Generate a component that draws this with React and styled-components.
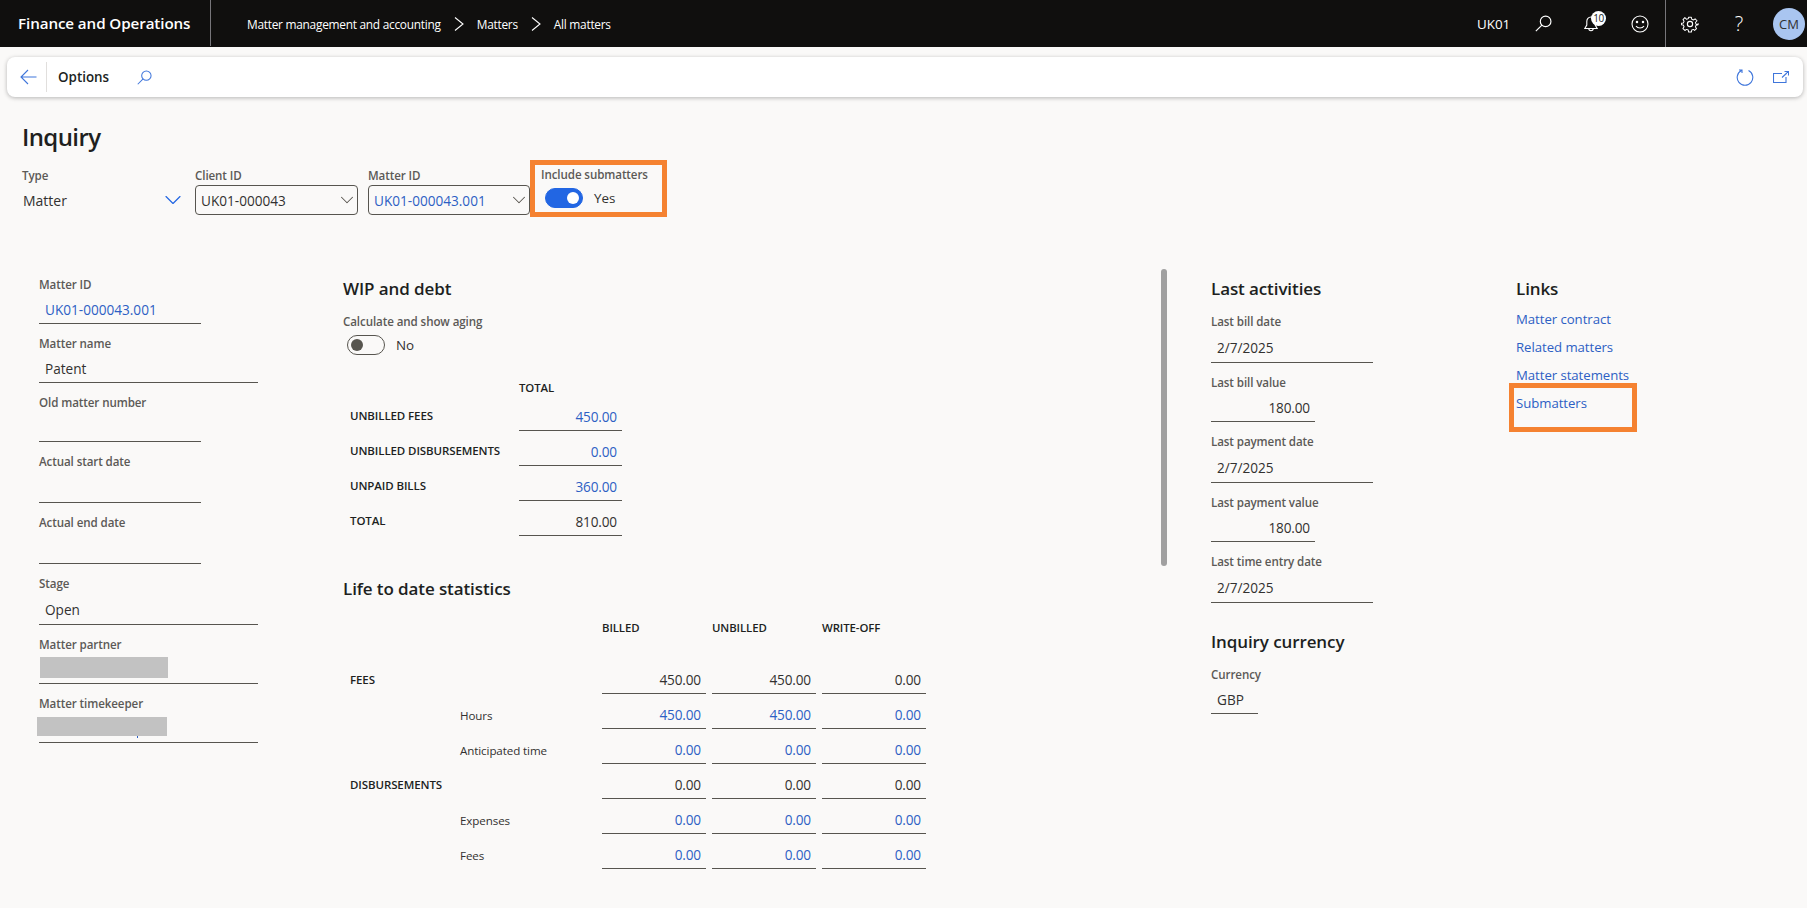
import { Fragment } from 'react';
import styled, { createGlobalStyle } from 'styled-components';
import { LuChevronDown } from 'react-icons/lu';

const GlobalStyle = createGlobalStyle`
  html, body {
    margin: 0;
    padding: 0;
    background: #faf9f8;
    color: #201f1e;
    font-family: "Open Sans", "Noto Sans", "Liberation Sans", sans-serif;
  }
  * {
    box-sizing: border-box;
  }
`;

const Page = styled.div`
  width: 1807px;
  height: 908px;
  overflow: hidden;
  background: #faf9f8;
`;

const TopBar = styled.header`
  display: flex;
  align-items: center;
  height: 47px;
  background: #100f0e;
  color: #fff;
`;

const AppName = styled.div`
  display: flex;
  align-items: center;
  width: 211px;
  height: 46px;
  margin-top: -1px;
  padding-left: 18px;
  border-right: 1px solid #77767a;
  font-size: 15.2px;
  font-weight: 600;
  letter-spacing: -0.1px;
  white-space: nowrap;
`;

const Crumbs = styled.nav`
  display: flex;
  align-items: center;
  padding-left: 36px;
  font-size: 11.9px;
  letter-spacing: -0.27px;

  svg {
    margin: 0 13px;
  }
`;

const TopRight = styled.div`
  display: flex;
  align-items: center;
  margin-left: auto;
  height: 47px;
`;

const Company = styled.span`
  width: 50px;
  font-size: 13.4px;
`;

const TopIcon = styled.span`
  position: relative;
  display: flex;
  justify-content: center;
  width: ${(p) => p.$w}px;
`;

const Badge = styled.span`
  position: absolute;
  top: -5px;
  left: 50%;
  width: 15px;
  height: 15px;
  border-radius: 50%;
  background: #fff;
  color: #201f1e;
  font-size: 10px;
  line-height: 15px;
  letter-spacing: -0.4px;
  text-align: center;
`;

const HelpMark = styled.span`
  font-size: 20px;
  font-weight: 300;
  line-height: 20px;
`;

const TopDivider = styled.span`
  width: 1px;
  height: 47px;
  margin-left: 8px;
  background: #77767a;
`;

const Avatar = styled.span`
  display: flex;
  align-items: center;
  justify-content: center;
  width: 32px;
  height: 32px;
  margin: 0 2px 0 9px;
  border-radius: 50%;
  background: #a9c5f0;
  color: #323130;
  font-size: 13px;
`;

const Toolbar = styled.div`
  display: flex;
  align-items: center;
  height: 40px;
  margin: 10px 4px 0 7px;
  padding: 0 14px 0 13px;
  background: #fff;
  border-radius: 8px;
  box-shadow: 0 1px 4px rgba(0, 0, 0, 0.28);
`;

const ToolDivider = styled.span`
  width: 1px;
  height: 30px;
  margin: 0 11px 0 9px;
  background: #e1dfdd;
`;

const ToolLabel = styled.span`
  width: 79px;
  font-size: 13.4px;
  font-weight: 600;
`;

const ToolRight = styled.div`
  display: flex;
  align-items: center;
  gap: 19px;
  margin-left: auto;
`;

const Title = styled.h1`
  margin: 20px 0 0 22px;
  height: 34px;
  font-size: 24px;
  line-height: 40px;
  font-weight: 600;
  letter-spacing: -0.6px;
`;

const FilterRow = styled.div`
  display: flex;
  align-items: flex-start;
  margin: 9px 0 0 22px;
`;

const FilterField = styled.div`
  width: ${(p) => p.$w}px;
  padding-top: 8px;
`;

const Label = styled.div`
  height: 16px;
  margin-top: ${(p) => p.$mt || 0}px;
  color: #5c5a57;
  font-size: 11.6px;
  font-weight: 600;
  line-height: 16px;
  letter-spacing: -0.1px;
  white-space: nowrap;
`;

const TypeValue = styled.div`
  display: flex;
  align-items: center;
  justify-content: space-between;
  width: 158px;
  height: 30px;
  margin-top: 1px;
  font-size: 14px;
  padding-left: 1px;
  color: #323130;

  svg {
    margin-right: -7px;
    color: #2266e3;
    font-size: 28px;
    stroke-width: 1;
  }
`;

const Select = styled.div`
  display: flex;
  align-items: center;
  justify-content: space-between;
  width: ${(p) => p.$w}px;
  height: 30px;
  margin-top: 1px;
  padding: 0 3px 0 5px;
  border: 1px solid #57554f;
  border-radius: 4px;
  color: ${(p) => (p.$link ? '#2d5fc4' : '#323130')};
  font-size: 13.6px;

  svg {
    margin-right: -4px;
    color: #57554f;
    font-size: 22px;
    stroke-width: 1.1;
  }
`;

const HighlightBox = styled.div`
  border: 5px solid #f58231;
`;

const IncludeBox = styled(HighlightBox)`
  width: 137px;
  height: 57px;
  padding: 2px 0 0 6px;
`;

const ToggleRow = styled.div`
  display: flex;
  align-items: center;
  gap: 11px;
  margin: ${(p) => p.$m};
  font-size: 13.4px;
  color: #323130;
`;

const Toggle = styled.span`
  display: flex;
  align-items: center;
  justify-content: ${(p) => (p.$on ? 'flex-end' : 'flex-start')};
  width: 38px;
  height: 20px;
  padding: 0 3px;
  border-radius: 10px;
  border: 1px solid ${(p) => (p.$on ? '#2266e3' : '#57554f')};
  background: ${(p) => (p.$on ? '#2266e3' : 'transparent')};

  &::after {
    content: '';
    width: 12px;
    height: 12px;
    border-radius: 50%;
    background: ${(p) => (p.$on ? '#fff' : '#57554f')};
  }
`;

const Columns = styled.main`
  display: grid;
  grid-template-columns: 304px 868px 305px 1fr;
  margin: 60px 0 0 39px;
`;

const FieldStack = styled.div`
  display: flex;
  flex-direction: column;
  gap: 12px;
  margin-top: ${(p) => p.$mt || 0}px;
`;

const Field = styled.div`
  position: relative;
  width: ${(p) => p.$w || 162}px;
  height: ${(p) => (p.$tall ? 49 : 47)}px;
  border-bottom: 1px solid #57554f;
`;

const Value = styled.div`
  height: 22px;
  margin-top: ${(p) => (p.$tall ? 7 : 6)}px;
  padding: 0 ${(p) => (p.$right ? '5px' : '6px')};
  color: ${(p) => (p.$link ? '#2d5fc4' : '#323130')};
  font-size: 13.6px;
  line-height: 22px;
  letter-spacing: ${(p) => (p.$right ? '-0.15px' : '0')};
  text-align: ${(p) => (p.$right ? 'right' : 'left')};
`;

const RedactBlock = styled.div`
  position: absolute;
  left: ${(p) => p.$l}px;
  top: ${(p) => p.$t}px;
  width: ${(p) => p.$w}px;
  height: ${(p) => p.$h}px;
  background: #c2c2c2;
`;

const Peek = styled.span`
  position: absolute;
  left: 98px;
  top: 40px;
  width: 1px;
  height: 2px;
  background: #2d5fc4;
`;

const Middle = styled.section`
  position: relative;
`;

const Scrollbar = styled.div`
  position: absolute;
  left: 818px;
  top: -8px;
  width: 6px;
  height: 297px;
  border-radius: 3px;
  background: #a0a0a0;
`;

const SectionTitle = styled.h2`
  height: 24px;
  margin: ${(p) => p.$mt || 0}px 0 0;
  font-size: 17px;
  font-weight: 600;
  line-height: 24px;
  letter-spacing: -0.1px;
`;

const StatsGrid = styled.div`
  display: grid;
  grid-template-columns: ${(p) => p.$cols};
  column-gap: ${(p) => p.$gap || 0}px;
  margin: ${(p) => p.$mt}px 0 0 7px;
`;

const ColHead = styled.div`
  height: ${(p) => p.$h}px;
  font-size: 11.4px;
  font-weight: 600;
  line-height: 16px;
  color: #201f1e;
  letter-spacing: -0.1px;
`;

const RowLabel = styled.div`
  grid-column: ${(p) => p.$col || 1};
  height: 35px;
  padding: ${(p) => p.$pt}px 0 0;
  font-size: ${(p) => (p.$sub ? '11.6px' : '11.5px')};
  font-weight: ${(p) => (p.$sub ? 400 : 600)};
  line-height: 22px;
  color: ${(p) => (p.$sub ? '#323130' : '#201f1e')};
  letter-spacing: -0.1px;
  white-space: nowrap;
`;

const Amount = styled.div`
  height: 35px;
  padding: 10px 5px 0 0;
  border-bottom: 1px solid #57554f;
  color: ${(p) => (p.$link ? '#2d5fc4' : '#323130')};
  font-size: 13.6px;
  line-height: 22px;
  letter-spacing: -0.15px;
  text-align: right;
`;

const LinkList = styled.div`
  display: flex;
  flex-direction: column;
  margin-top: 4px;
`;

const LinkItem = styled.a`
  display: block;
  height: 28px;
  color: #2d5fc4;
  font-size: 13.2px;
  line-height: 28px;
  letter-spacing: -0.05px;
`;

const SubmattersBox = styled(HighlightBox)`
  width: 128px;
  height: 49px;
  margin: -6px 0 0 -7px;
  padding: 1px 0 0 2px;
`;

function CrumbChevron() {
  return (
    <svg width="10" height="14" viewBox="0 0 10 14" fill="none" stroke="#fff" strokeWidth="1.1">
      <path d="M1 .5 9 7l-8 6.500" />
    </svg>
  );
}

function BackIcon() {
  return (
    <svg width="17" height="16" viewBox="0 0 17 16" fill="none" stroke="#3f76db" strokeWidth="1.1">
      <path d="M16.500 8H1M8 1 1 8l7 7" />
    </svg>
  );
}

function SearchIcon({ color, size }) {
  return (
    <svg width={size} height={size} viewBox="0 0 16 16" fill="none" stroke={color} strokeWidth="1.1">
      <circle cx="10" cy="6" r="5" />
      <path d="M6.500 9.500 .8 15.200" />
    </svg>
  );
}

function BellIcon() {
  return (
    <svg width="14" height="16" viewBox="0 0 14 16" fill="none" stroke="#fff" strokeWidth="1.1">
      <path d="M7 1C4.300 1 2.800 3 2.800 5.500v3.500L.8 12.500h12.400L11.200 9V5.500C11.200 3 9.700 1 7 1zM4.800 12.500c0 3 4.400 3 4.400 0" />
    </svg>
  );
}

function SmileIcon() {
  return (
    <svg width="18" height="18" viewBox="0 0 18 18" fill="none" stroke="#fff" strokeWidth="1.1">
      <circle cx="9" cy="9" r="8" />
      <circle cx="6" cy="7" r=".7" fill="#fff" />
      <circle cx="12" cy="7" r=".7" fill="#fff" />
      <path d="M5 11c1.800 2.700 6.200 2.700 8 0" />
    </svg>
  );
}

function GearIcon() {
  return (
    <svg width="18" height="18" viewBox="0 0 24 24" fill="none" stroke="#fff" strokeWidth="1.500" strokeLinejoin="round">
      <path d="M10 2h4l.6 3 2.400 1 2.600-1.600 2.800 2.800L20 9.800l1 2.400 3 .6v-1.600 2l-3 .6-1 2.400 1.600 2.600-2.800 2.800L17 20l-2.400 1-.6 3h-4l-.6-3L7 20l-2.600 1.600-2.800-2.800L3.200 16l-1-2.400-3-.6v-2l3-.6 1-2.400-1.600-2.600 2.800-2.800L7 5l2.400-1z" transform="translate(1.200 1.200) scale(.9)" />
      <circle cx="12" cy="12" r="3.500" />
    </svg>
  );
}

function RefreshIcon() {
  return (
    <svg width="18" height="18" viewBox="0 0 18 18" fill="none" stroke="#3f76db" strokeWidth="1.1">
      <path d="M5.500 2.500a7.800 7.800 0 1 0 7 0M3 2h3v3" />
    </svg>
  );
}

function OpenIcon() {
  return (
    <svg width="16" height="12" viewBox="0 0 16 12" fill="none" stroke="#3f76db" strokeWidth="1.1">
      <path d="M9 2.500H.5v9h12.500V6M9 6.500 15.500.5M11.500.5h4v4" />
    </svg>
  );
}

const wipRows = [
  { label: 'UNBILLED FEES', value: '450.00', link: true },
  { label: 'UNBILLED DISBURSEMENTS', value: '0.00', link: true },
  { label: 'UNPAID BILLS', value: '360.00', link: true },
  { label: 'TOTAL', value: '810.00' },
];

const statRows = [
  { label: 'FEES', values: ['450.00', '450.00', '0.00'] },
  { label: 'Hours', sub: true, link: true, values: ['450.00', '450.00', '0.00'] },
  { label: 'Anticipated time', sub: true, link: true, values: ['0.00', '0.00', '0.00'] },
  { label: 'DISBURSEMENTS', values: ['0.00', '0.00', '0.00'] },
  { label: 'Expenses', sub: true, link: true, values: ['0.00', '0.00', '0.00'] },
  { label: 'Fees', sub: true, link: true, values: ['0.00', '0.00', '0.00'] },
];

function App() {
  return (
    <Page>
      <GlobalStyle />
      <TopBar>
        <AppName>Finance and Operations</AppName>
        <Crumbs>
          Matter management and accounting
          <CrumbChevron />
          Matters
          <CrumbChevron />
          All matters
        </Crumbs>
        <TopRight>
          <Company>UK01</Company>
          <TopIcon $w={32}>
            <SearchIcon color="#fff" size={17} />
          </TopIcon>
          <TopIcon $w={64}>
            <BellIcon />
            <Badge>10</Badge>
          </TopIcon>
          <TopIcon $w={34}>
            <SmileIcon />
          </TopIcon>
          <TopDivider />
          <TopIcon $w={48}>
            <GearIcon />
          </TopIcon>
          <TopIcon $w={50}>
            <HelpMark>?</HelpMark>
          </TopIcon>
          <Avatar>CM</Avatar>
        </TopRight>
      </TopBar>

      <Toolbar>
        <BackIcon />
        <ToolDivider />
        <ToolLabel>Options</ToolLabel>
        <SearchIcon color="#3f76db" size={15} />
        <ToolRight>
          <RefreshIcon />
          <OpenIcon />
        </ToolRight>
      </Toolbar>

      <Title>Inquiry</Title>
      <FilterRow>
        <FilterField $w={173}>
          <Label>Type</Label>
          <TypeValue>
            Matter
            <LuChevronDown />
          </TypeValue>
        </FilterField>
        <FilterField $w={173}>
          <Label>Client ID</Label>
          <Select $w={163}>
            UK01-000043
            <LuChevronDown />
          </Select>
        </FilterField>
        <FilterField $w={162}>
          <Label>Matter ID</Label>
          <Select $w={162} $link>
            UK01-000043.001
            <LuChevronDown />
          </Select>
        </FilterField>
        <IncludeBox>
          <Label>Include submatters</Label>
          <ToggleRow $m="5px 0 0 4px">
            <Toggle $on />
            Yes
          </ToggleRow>
        </IncludeBox>
      </FilterRow>

      <Columns>
        <FieldStack>
          <Field>
            <Label>Matter ID</Label>
            <Value $link>UK01-000043.001</Value>
          </Field>
          <Field $w={219}>
            <Label>Matter name</Label>
            <Value>Patent</Value>
          </Field>
          <Field>
            <Label>Old matter number</Label>
          </Field>
          <Field $tall>
            <Label>Actual start date</Label>
          </Field>
          <Field $tall>
            <Label>Actual end date</Label>
          </Field>
          <Field $w={219} $tall>
            <Label>Stage</Label>
            <Value $tall>Open</Value>
          </Field>
          <Field $w={219}>
            <Label>Matter partner</Label>
            <RedactBlock $l={1} $t={20} $w={128} $h={21} />
          </Field>
          <Field $w={219}>
            <Label>Matter timekeeper</Label>
            <Peek />
            <RedactBlock $l={-2} $t={21} $w={130} $h={19} />
          </Field>
        </FieldStack>

        <Middle>
          <Scrollbar />
          <SectionTitle>WIP and debt</SectionTitle>
          <Label $mt={13}>Calculate and show aging</Label>
          <ToggleRow $m="5px 0 0 4px">
            <Toggle />
            No
          </ToggleRow>
          <StatsGrid $cols="169px 103px" $mt={25}>
            <div />
            <ColHead $h={16}>TOTAL</ColHead>
            {wipRows.map((row) => (
              <Fragment key={row.label}>
                <RowLabel $pt={9}>{row.label}</RowLabel>
                <Amount $link={row.link}>{row.value}</Amount>
              </Fragment>
            ))}
          </StatsGrid>

          <SectionTitle $mt={41}>Life to date statistics</SectionTitle>
          <StatsGrid $cols="104px 136px 104px 104px 104px" $gap={6} $mt={19}>
            <div />
            <div />
            <ColHead $h={39}>BILLED</ColHead>
            <ColHead $h={39}>UNBILLED</ColHead>
            <ColHead $h={39}>WRITE-OFF</ColHead>
            {statRows.map((row) => (
              <Fragment key={row.label}>
                <RowLabel $col={row.sub ? 2 : 1} $sub={row.sub} $pt={row.sub ? 11 : 10}>
                  {row.label}
                </RowLabel>
                {!row.sub && <div />}
                {row.values.map((v, i) => (
                  <Amount key={i} $link={row.link}>
                    {v}
                  </Amount>
                ))}
              </Fragment>
            ))}
          </StatsGrid>
        </Middle>

        <section>
          <SectionTitle>Last activities</SectionTitle>
          <FieldStack $mt={13}>
            <Field $tall>
              <Label>Last bill date</Label>
              <Value $tall>2/7/2025</Value>
            </Field>
            <Field $w={104}>
              <Label>Last bill value</Label>
              <Value $right>180.00</Value>
            </Field>
            <Field $tall>
              <Label>Last payment date</Label>
              <Value $tall>2/7/2025</Value>
            </Field>
            <Field $w={104}>
              <Label>Last payment value</Label>
              <Value $right>180.00</Value>
            </Field>
            <Field $tall>
              <Label>Last time entry date</Label>
              <Value $tall>2/7/2025</Value>
            </Field>
          </FieldStack>
          <SectionTitle $mt={27}>Inquiry currency</SectionTitle>
          <FieldStack $mt={13}>
            <Field $w={47}>
              <Label>Currency</Label>
              <Value>GBP</Value>
            </Field>
          </FieldStack>
        </section>

        <section>
          <SectionTitle>Links</SectionTitle>
          <LinkList>
            <LinkItem>Matter contract</LinkItem>
            <LinkItem>Related matters</LinkItem>
            <LinkItem>Matter statements</LinkItem>
            <SubmattersBox>
              <LinkItem>Submatters</LinkItem>
            </SubmattersBox>
          </LinkList>
        </section>
      </Columns>
    </Page>
  );
}

export default App;
